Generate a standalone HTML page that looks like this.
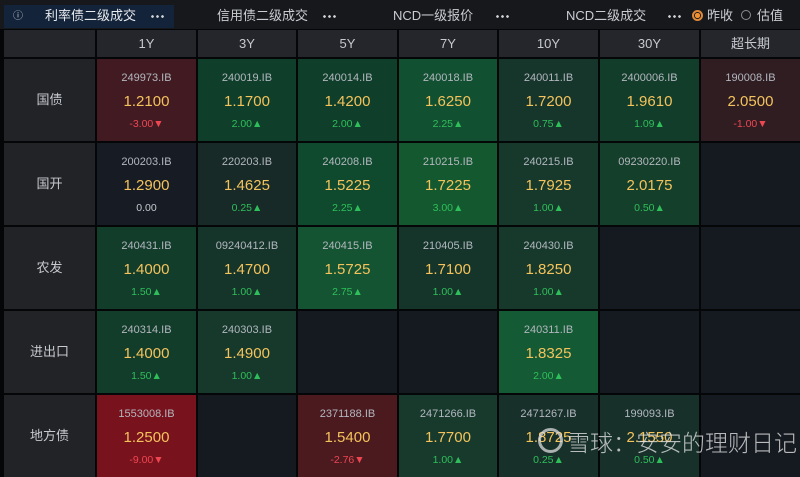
<!DOCTYPE html><html><head><meta charset="utf-8"><style>
body{margin:0;width:800px;height:475px;background:#050607;overflow:hidden;position:relative;font-family:"Liberation Sans","Noto Sans CJK SC",sans-serif}
.tb{position:absolute;left:0;top:0;width:800px;height:29px;background:#17181c}
.t{position:absolute;top:5px;font-size:13px;color:#c9ccd2}
.dots{position:absolute;top:15px;width:14px;height:3px;background:radial-gradient(circle,#d0d2d6 1.2px,transparent 1.5px) 0 0/5px 3px repeat-x}
.c{position:absolute;text-align:center;box-sizing:border-box}
.h{background:#24262b;color:#c6c9cf;font-size:13px;line-height:27px;height:27px}
.l{background:#222327;color:#c6c9cf;font-size:13px;height:82px;line-height:82px}
.d{height:82px}
.d .a{position:absolute;top:13px;width:100%;font-size:11px;color:#b3b7bf}
.d .v{position:absolute;top:34px;width:100%;font-size:15px;color:#f4c35c}
.d .g{position:absolute;top:59px;width:100%;font-size:10.5px}
.up{color:#2fbf5a}.dn{color:#ef4652}.z{color:#c6c9cf}
</style></head><body>
<div class="tb"></div>
<div style="position:absolute;left:4px;top:5px;width:170px;height:23px;background:#13233a"></div>
<div class="t" style="left:13px;top:7px;font-size:10px">ⓘ</div>
<div class="t" style="left:45px;color:#e8eaee">利率债二级成交</div>
<div class="dots" style="left:150px"></div>
<div class="t" style="left:217px">信用债二级成交</div>
<div class="dots" style="left:322px"></div>
<div class="t" style="left:393px">NCD一级报价</div>
<div class="dots" style="left:495px"></div>
<div class="t" style="left:566px">NCD二级成交</div>
<div class="dots" style="left:667px"></div>
<div style="position:absolute;left:692px;top:10px;width:7px;height:7px;border-radius:50%;border:2px solid #e0893a;background:radial-gradient(#f0902f 50%,transparent 55%)"></div>
<div class="t" style="left:707px">昨收</div>
<div style="position:absolute;left:741px;top:10px;width:8px;height:8px;border-radius:50%;border:1px solid #8a8d93"></div>
<div class="t" style="left:757px">估值</div>
<div id="g"></div>
<div style="position:absolute;left:567px;top:424px;font-size:23px;font-weight:300;color:rgba(225,225,225,0.8);font-family:'Noto Sans CJK SC',sans-serif">雪球：安安的理财日记</div>
<div style="position:absolute;left:538px;top:428px;width:19px;height:19px;border:3px solid rgba(220,220,220,.75);border-radius:50%"></div>
<script>
var xs=[97,198,298,399,499,600,701],ws=[99,98,99,98,99,99,99];
var H=['1Y','3Y','5Y','7Y','10Y','30Y','超长期'],L=['国债','国开','农发','进出口','地方债'];
var E='#151a21';
var D=[
[['#421b22','249973.IB','1.2100','-3.00','d'],['#0f3f2a','240019.IB','1.1700','2.00','u'],['#0f3f2a','240014.IB','1.4200','2.00','u'],['#125032','240018.IB','1.6250','2.25','u'],['#16352b','240011.IB','1.7200','0.75','u'],['#133d2b','2400006.IB','1.9610','1.09','u'],['#2f1d22','190008.IB','2.0500','-1.00','d']],
[['#171c24','200203.IB','1.2900','0.00','z'],['#172a27','220203.IB','1.4625','0.25','u'],['#0f4a2e','240208.IB','1.5225','2.25','u'],['#14582f','210215.IB','1.7225','3.00','u'],['#16392b','240215.IB','1.7925','1.00','u'],['#143f2b','09230220.IB','2.0175','0.50','u'],null],
[['#123d2b','240431.IB','1.4000','1.50','u'],['#16352a','09240412.IB','1.4700','1.00','u'],['#145432','240415.IB','1.5725','2.75','u'],['#16352a','210405.IB','1.7100','1.00','u'],['#16392b','240430.IB','1.8250','1.00','u'],null,null],
[['#133d2b','240314.IB','1.4000','1.50','u'],['#16392b','240303.IB','1.4900','1.00','u'],null,null,['#145a35','240311.IB','1.8325','2.00','u'],null,null],
[['#78121d','1553008.IB','1.2500','-9.00','d'],null,['#4a1a1f','2371188.IB','1.5400','-2.76','d'],['#173a2d','2471266.IB','1.7700','1.00','u'],['#17302a','2471267.IB','1.8725','0.25','u'],['#17302a','199093.IB','2.1550','0.50','u'],null]];
var s='<div class="c h" style="left:4px;top:30px;width:91px"></div>';
for(var i=0;i<7;i++)s+='<div class="c h" style="left:'+xs[i]+'px;top:30px;width:'+ws[i]+'px">'+H[i]+'</div>';
for(var r=0;r<5;r++){var y=59+r*84;s+='<div class="c l" style="left:4px;top:'+y+'px;width:91px">'+L[r]+'</div>';
for(var i=0;i<7;i++){var d=D[r][i];if(!d){s+='<div class="c d" style="left:'+xs[i]+'px;top:'+y+'px;width:'+ws[i]+'px;background:'+E+'"></div>';continue;}
var cl=d[4]=='u'?'up':d[4]=='d'?'dn':'z',ar=d[4]=='u'?'▲':d[4]=='d'?'▼':'';
s+='<div class="c d" style="left:'+xs[i]+'px;top:'+y+'px;width:'+ws[i]+'px;background:'+d[0]+'"><div class="a">'+d[1]+'</div><div class="v">'+d[2]+'</div><div class="g '+cl+'">'+d[3]+ar+'</div></div>';}}
document.getElementById('g').innerHTML=s;
</script>
</body></html>
